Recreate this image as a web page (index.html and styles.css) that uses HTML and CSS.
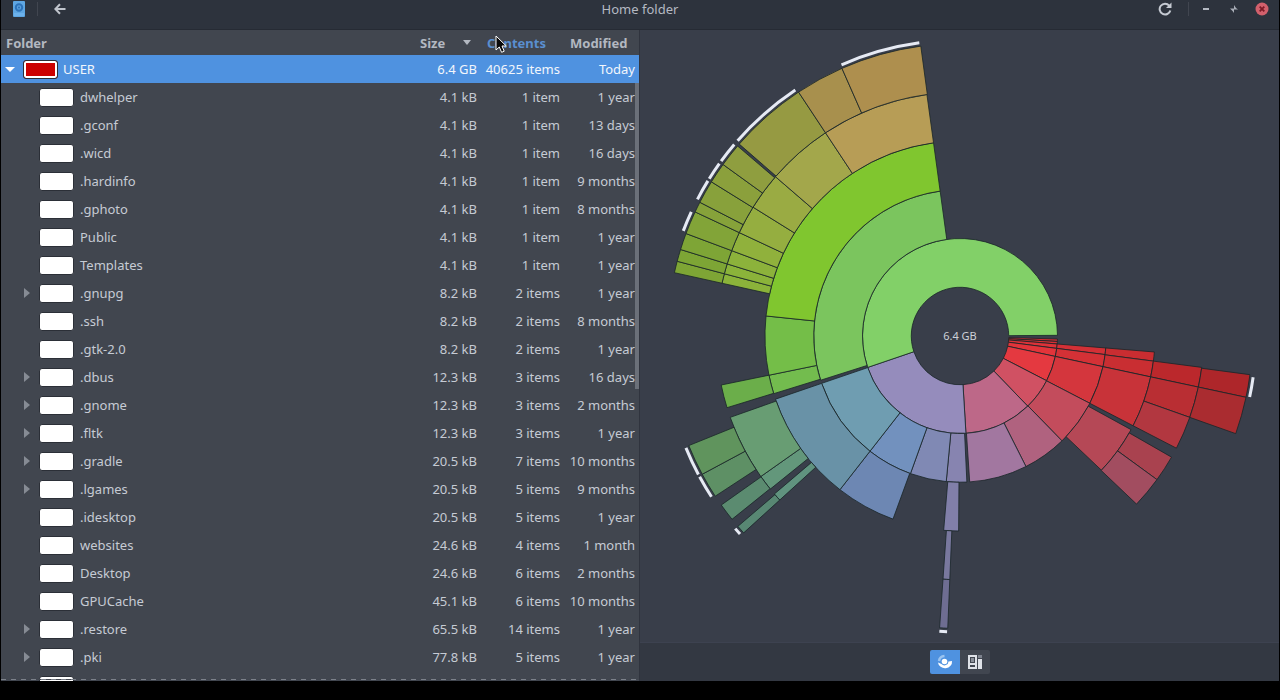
FILE: index.html
```html
<!DOCTYPE html>
<html lang="en">
<head>
    <meta charset="UTF-8">
    <meta name="viewport" content="width=device-width, initial-scale=1.0">
    <title>Home folder</title>
    <link rel="stylesheet" href="styles.css">
</head>
<body>
    <div class="window">
        <header class="titlebar">
            <div class="bar-left">
                <svg class="app-icon" width="12" height="16" viewBox="0 0 12 16">
                    <rect width="12" height="16" rx="1" fill="#5ea6e2"/>
                    <rect x="1" y="12" width="10" height="3" fill="#6cb2ec"/>
                    <circle cx="6" cy="6.500" r="3.200" fill="#5a9fdc" stroke="#2c72b8" stroke-width="2"/>
                    <circle cx="6" cy="6.500" r="1" fill="#2c72b8"/>
                </svg>
                <span class="bar-sep"></span>
                <button class="icon-btn back" aria-label="Back">
                    <svg width="12" height="12" viewBox="0 0 12 12" fill="none" stroke="#c0c5cd" stroke-width="2">
                        <path d="M11.500 6H1.500M6 1.200L1.300 6L6 10.800"/>
                    </svg>
                </button>
            </div>
            <h1 class="title">Home folder</h1>
            <div class="bar-right">
                <button class="icon-btn" aria-label="Reload">
                    <svg width="14" height="14" viewBox="0 0 14 14">
                        <path d="M11.200 3.600A5.400 5.400 0 1 0 12.300 8.400" fill="none" stroke="#c5cad2" stroke-width="2"/>
                        <path d="M13.500 0.500V6H8z" fill="#c5cad2"/>
                    </svg>
                </button>
                <span class="bar-sep"></span>
                <button class="icon-btn" aria-label="Minimize">
                    <svg width="14" height="14" viewBox="0 0 14 14"><rect x="4" y="6" width="6" height="2" fill="#b4b9c2"/></svg>
                </button>
                <button class="icon-btn" aria-label="Restore">
                    <svg width="14" height="14" viewBox="0 0 14 14" fill="#a9aeb8">
                        <path d="M3 6.500h4V11L5.500 9z"/>
                        <path d="M7 3v4.500h4L9 6z"/>
                    </svg>
                </button>
                <button class="icon-btn" aria-label="Close">
                    <svg width="14" height="14" viewBox="0 0 14 14">
                        <circle cx="7" cy="7" r="6.500" fill="#d2606c"/>
                        <path d="M4.700 4.700L9.300 9.300M9.300 4.700L4.700 9.300" stroke="#7d1a26" stroke-width="1.800"/>
                    </svg>
                </button>
            </div>
        </header>

        <main class="panes">
            <section class="folders">
                <table class="tree">
                    <thead>
                        <tr>
                            <th class="col-name"><button>Folder</button></th>
                            <th class="col-size"><button>Size<span class="sort"></span></button></th>
                            <th class="col-items"><button class="hover">Contents</button></th>
                            <th class="col-date"><button>Modified</button></th>
                        </tr>
                    </thead>
                    <tbody>
                        <tr class="selected">
                            <td><div class="name root"><button class="expander open" aria-label="Collapse USER"></button><span class="usage full"></span>USER</div></td>
                            <td>6.4 GB</td><td>40625 items</td><td>Today</td>
                        </tr>
                        <tr>
                            <td><div class="name"><span class="usage"></span>dwhelper</div></td>
                            <td>4.1 kB</td><td>1 item</td><td>1 year</td>
                        </tr>
                        <tr>
                            <td><div class="name"><span class="usage"></span>.gconf</div></td>
                            <td>4.1 kB</td><td>1 item</td><td>13 days</td>
                        </tr>
                        <tr>
                            <td><div class="name"><span class="usage"></span>.wicd</div></td>
                            <td>4.1 kB</td><td>1 item</td><td>16 days</td>
                        </tr>
                        <tr>
                            <td><div class="name"><span class="usage"></span>.hardinfo</div></td>
                            <td>4.1 kB</td><td>1 item</td><td>9 months</td>
                        </tr>
                        <tr>
                            <td><div class="name"><span class="usage"></span>.gphoto</div></td>
                            <td>4.1 kB</td><td>1 item</td><td>8 months</td>
                        </tr>
                        <tr>
                            <td><div class="name"><span class="usage"></span>Public</div></td>
                            <td>4.1 kB</td><td>1 item</td><td>1 year</td>
                        </tr>
                        <tr>
                            <td><div class="name"><span class="usage"></span>Templates</div></td>
                            <td>4.1 kB</td><td>1 item</td><td>1 year</td>
                        </tr>
                        <tr>
                            <td><div class="name"><button class="expander" aria-label="Expand .gnupg"></button><span class="usage"></span>.gnupg</div></td>
                            <td>8.2 kB</td><td>2 items</td><td>1 year</td>
                        </tr>
                        <tr>
                            <td><div class="name"><span class="usage"></span>.ssh</div></td>
                            <td>8.2 kB</td><td>2 items</td><td>8 months</td>
                        </tr>
                        <tr>
                            <td><div class="name"><span class="usage"></span>.gtk-2.0</div></td>
                            <td>8.2 kB</td><td>2 items</td><td>1 year</td>
                        </tr>
                        <tr>
                            <td><div class="name"><button class="expander" aria-label="Expand .dbus"></button><span class="usage"></span>.dbus</div></td>
                            <td>12.3 kB</td><td>3 items</td><td>16 days</td>
                        </tr>
                        <tr>
                            <td><div class="name"><button class="expander" aria-label="Expand .gnome"></button><span class="usage"></span>.gnome</div></td>
                            <td>12.3 kB</td><td>3 items</td><td>2 months</td>
                        </tr>
                        <tr>
                            <td><div class="name"><button class="expander" aria-label="Expand .fltk"></button><span class="usage"></span>.fltk</div></td>
                            <td>12.3 kB</td><td>3 items</td><td>1 year</td>
                        </tr>
                        <tr>
                            <td><div class="name"><button class="expander" aria-label="Expand .gradle"></button><span class="usage"></span>.gradle</div></td>
                            <td>20.5 kB</td><td>7 items</td><td>10 months</td>
                        </tr>
                        <tr>
                            <td><div class="name"><button class="expander" aria-label="Expand .lgames"></button><span class="usage"></span>.lgames</div></td>
                            <td>20.5 kB</td><td>5 items</td><td>9 months</td>
                        </tr>
                        <tr>
                            <td><div class="name"><span class="usage"></span>.idesktop</div></td>
                            <td>20.5 kB</td><td>5 items</td><td>1 year</td>
                        </tr>
                        <tr>
                            <td><div class="name"><span class="usage"></span>websites</div></td>
                            <td>24.6 kB</td><td>4 items</td><td>1 month</td>
                        </tr>
                        <tr>
                            <td><div class="name"><span class="usage"></span>Desktop</div></td>
                            <td>24.6 kB</td><td>6 items</td><td>2 months</td>
                        </tr>
                        <tr>
                            <td><div class="name"><span class="usage"></span>GPUCache</div></td>
                            <td>45.1 kB</td><td>6 items</td><td>10 months</td>
                        </tr>
                        <tr>
                            <td><div class="name"><button class="expander" aria-label="Expand .restore"></button><span class="usage"></span>.restore</div></td>
                            <td>65.5 kB</td><td>14 items</td><td>1 year</td>
                        </tr>
                        <tr>
                            <td><div class="name"><button class="expander" aria-label="Expand .pki"></button><span class="usage"></span>.pki</div></td>
                            <td>77.8 kB</td><td>5 items</td><td>1 year</td>
                        </tr>
                        <tr>
                            <td><div class="name"><span class="usage"></span></div></td>
                            <td></td><td></td><td></td>
                        </tr>
                    </tbody>
                </table>
                <div class="scrollbar"></div>
            </section>

            <section class="chart-pane">
                <div class="chart">
                    <svg id="rings" viewBox="-306 -306 612 612" role="img" aria-label="Rings chart">
                        <text class="total" x="0" y="4" text-anchor="middle">6.4 GB</text>
                    </svg>
                </div>
                <footer class="switcher">
                    <button class="view active" aria-label="Rings chart">
                        <svg width="16" height="16" viewBox="0 0 16 16">
                            <path d="M2 7A6 6 0 0 1 7.500 2" fill="none" stroke="#9cc4f0" stroke-width="2.500"/>
                            <path d="M1 8.500A7 6.500 0 0 0 15 7L11.500 7.500A4 4 0 0 1 4.500 10z" fill="#fff"/>
                            <circle cx="7.500" cy="7.500" r="2.800" fill="#fff"/>
                        </svg>
                    </button>
                    <button class="view" aria-label="Treemap chart">
                        <svg width="16" height="16" viewBox="0 0 16 16">
                            <path d="M1 1h9v14H1zM3 3v6h5V3zM3 11v2h5v-2z" fill="#dfe2e8" fill-rule="evenodd"/>
                            <rect x="4" y="4" width="3" height="4" fill="#8a8f99"/>
                            <rect x="11" y="1" width="4" height="3" fill="#7d828d"/>
                            <rect x="11" y="5" width="4" height="10" fill="#dfe2e8"/>
                        </svg>
                    </button>
                </footer>
            </section>
        </main>

        <svg class="pointer" width="13" height="19" viewBox="0 0 13 19">
            <path d="M1 1V15L4.300 12L6.600 17.300L9.200 16.200L7 11H11.300z" fill="#0a0a0a" stroke="#fff" stroke-width="1"/>
        </svg>
    </div>
    <script src="script.js"></script>
</body>
</html>
```

FILE: styles.css
```css
* {
    box-sizing: border-box;
}
body {
    margin: 0;
    background: #000;
    color: #c6cbd4;
    font-family: "Noto Sans", "Open Sans", sans-serif;
    font-size: 13px;
    line-height: 18px;
}
button {
    margin: 0;
    padding: 0;
    border: none;
    background: none;
    color: inherit;
    font: inherit;
}
.window {
    position: relative;
    display: flex;
    flex-direction: column;
    height: calc(100vh - 19px);
    margin: 0 1px;
    background: #393e4a;
    overflow: hidden;
}

/* title bar */
.titlebar {
    display: grid;
    grid-template-columns: 1fr auto 1fr;
    align-items: center;
    padding: 0 10px 11px;
    background: #2d333d;
    border-bottom: 1px solid #262b34;
}
.title {
    margin: 0;
    font-size: 13px;
    font-weight: normal;
    color: #b4b9c2;
}
.bar-left,
.bar-right {
    display: flex;
    align-items: center;
}
.bar-left {
    padding-left: 2px;
}
.bar-right {
    justify-content: flex-end;
    gap: 14px;
}
.bar-sep {
    width: 1px;
    height: 14px;
    background: #414650;
}
.bar-left .bar-sep {
    margin: 0 16px 0 12px;
}
.bar-right .bar-sep {
    margin: 0 -4px 0 2px;
}
.icon-btn {
    display: flex;
}

/* folder tree */
.panes {
    display: grid;
    grid-template-columns: 1fr 1fr;
    flex: 1;
    min-height: 0;
}
.folders {
    position: relative;
    overflow: hidden;
    background: #41464f;
    border-right: 1px solid #30343e;
}
.folders::after {
    content: "";
    position: absolute;
    left: 0;
    right: 0;
    bottom: 1px;
    height: 1px;
    background: repeating-linear-gradient(90deg, #7c818a 0 5px, #41464f 5px 10px);
}
.tree {
    width: 100%;
    table-layout: fixed;
    border-collapse: collapse;
}
.tree th {
    height: 25px;
    padding: 0 6px;
    text-align: left;
    font-weight: bold;
    color: #b3b8c1;
}
.tree .col-name {
    padding-left: 5px;
}
.tree th button {
    display: flex;
    align-items: center;
    justify-content: space-between;
    width: 100%;
}
.tree th .hover {
    color: #5a8fd0;
}
.col-size {
    width: 67px;
}
.col-items {
    width: 83px;
}
.col-date {
    width: 75px;
}
.sort {
    margin-right: 4px;
    border: 4px solid transparent;
    border-top: 5px solid #b3b8c1;
    border-bottom: none;
}
.tree td {
    height: 28px;
    padding: 0 4px 0 0;
    text-align: right;
    white-space: nowrap;
}
.selected {
    background: #4f92e0;
    color: #f2f6fc;
}
.name {
    position: relative;
    display: flex;
    align-items: center;
    gap: 6px;
    padding-left: 38px;
}
.name.root {
    padding-left: 22px;
    gap: 5px;
}
.usage {
    width: 35px;
    height: 19px;
    border: 1px solid #2b2f37;
    border-radius: 3px;
    background: #fff;
}
.usage.full {
    background: #c00;
    box-shadow: inset 0 0 0 2px #fff;
}
.expander {
    position: absolute;
    left: 23px;
    border: 5px solid transparent;
    border-left: 6px solid #868b94;
    border-right: none;
}
.expander.open {
    left: 4px;
    border: 5px solid transparent;
    border-top: 5px solid #fff;
    border-bottom: none;
}
.scrollbar {
    position: absolute;
    top: 53px;
    right: 0;
    width: 4px;
    height: 47%;
    background: #6b7079;
}

/* chart */
.chart-pane {
    display: flex;
    flex-direction: column;
    min-height: 0;
}
.chart {
    flex: 1;
    min-height: 0;
    padding-left: 1px;
}
.chart svg {
    display: block;
    width: 100%;
    height: 100%;
}
.total {
    font-size: 11px;
    fill: #ccd0d8;
}
.slice {
    stroke: rgba(25, 38, 40, 0.8);
    stroke-width: 1;
}
.more {
    fill: none;
    stroke: #e6eaf4;
    stroke-width: 3;
}
.switcher {
    display: flex;
    justify-content: center;
    padding: 7px 0;
    background: #333842;
    border-top: 1px solid #3d4250;
}
.view {
    display: flex;
    align-items: center;
    justify-content: center;
    width: 30px;
    height: 24px;
    background: #414650;
    border-radius: 0 2px 2px 0;
}
.view.active {
    background: #4f92e0;
    border-radius: 2px 0 0 2px;
}
.pointer {
    position: absolute;
    left: 494px;
    top: 35px;
}
```

FILE: script.js
```javascript
const RING = 48.75;

// [ring, start angle, end angle, color], degrees clockwise from 3 o'clock
const slices = [
    [1, 1.8, 3.2, '#d42f35'],
    [1, 3.2, 4.7, '#d83035'],
    [1, 4.7, 7.3, '#dd3238'],
    [1, 7.3, 12.1, '#e2343a'],
    [1, 12.1, 27.3, '#e43940'],
    [1, 27.3, 46, '#d05163'],
    [1, 46, 86.5, '#bd6888'],
    [1, 86.5, 161.2, '#958cbc'],
    [1, 161.2, 359.6, '#82d068'],

    [2, 4.7, 7.3, '#d33036'],
    [2, 7.3, 12.1, '#d43136'],
    [2, 12.1, 27.4, '#d4363d'],
    [2, 27.4, 45.8, '#c34c5c'],
    [2, 45.8, 63.2, '#b0627f'],
    [2, 63.2, 86.2, '#a277a0'],
    [2, 87.3, 95.4, '#8784b0'],
    [2, 95.4, 109.8, '#8089b4'],
    [2, 109.8, 128, '#7291be'],
    [2, 128, 161.1, '#6f9db1'],
    [2, 162.4, 262.2, '#7bc55e'],

    [3, 4.7, 7.4, '#c92d31'],
    [3, 7.4, 12.1, '#c92e32'],
    [3, 12.1, 27.4, '#c83339'],
    [3, 28.7, 43.5, '#b54856'],
    [3, 90.4, 94.8, '#817fa9'],
    [3, 110.1, 128, '#6d87b3'],
    [3, 128, 161.1, '#6992a7'],
    [3, 162.8, 168.4, '#73bc4e'],
    [3, 168.4, 185.9, '#74be48'],
    [3, 185.9, 262.2, '#80c62f'],

    [4, 7.4, 12.1, '#bb282c'],
    [4, 12.1, 19.5, '#b92e33'],
    [4, 19.5, 27.4, '#b23740'],
    [4, 29.8, 36.1, '#a9424f'],
    [4, 36.1, 43.6, '#a24d60'],
    [4, 92.4, 94, '#79789e'],
    [4, 137.7, 139.6, '#60937f'],
    [4, 141.1, 144.8, '#63977b'],
    [4, 144.8, 160.5, '#689d73'],
    [4, 162.9, 168.4, '#6bae4a'],
    [4, 192.5, 194.8, '#8bb33a'],
    [4, 194.8, 197.2, '#8bb33a'],
    [4, 197.2, 200.5, '#8cb23b'],
    [4, 200.5, 205.1, '#90b13c'],
    [4, 205.1, 211.9, '#95ae40'],
    [4, 211.9, 220.8, '#9aab43'],
    [4, 220.8, 236.5, '#a3a74b'],
    [4, 236.5, 262.2, '#b79d56'],

    [5, 7.6, 12.1, '#ae262a'],
    [5, 12.1, 19.5, '#aa2c30'],
    [5, 92.4, 94, '#6e6d92'],
    [5, 137.7, 139.4, '#588773'],
    [5, 141.2, 144.7, '#5b8b70'],
    [5, 146.8, 151.8, '#5e9065'],
    [5, 151.8, 158, '#60945d'],
    [5, 192.5, 194.8, '#7ea535'],
    [5, 194.8, 197.2, '#7da535'],
    [5, 197.2, 200.5, '#7ea536'],
    [5, 200.5, 205.1, '#82a438'],
    [5, 205.1, 207.2, '#86a23a'],
    [5, 207.2, 211.8, '#88a13b'],
    [5, 211.8, 215.9, '#8ba03c'],
    [5, 215.9, 220.5, '#8f9e3f'],
    [5, 221, 236.5, '#969a42'],
    [5, 236.5, 246.2, '#a8904d'],
    [5, 246.2, 262.3, '#ae8f4e']
];

// folders deeper than the last ring
const more = [
    [8, 11.9],
    [92.5, 94],
    [138, 139.4],
    [147.1, 151.6],
    [152.1, 157.8],
    [200.8, 204.8],
    [207.5, 211.6],
    [212.1, 215.6],
    [216.2, 220.3],
    [221.3, 236.2],
    [246.4, 262.1]
];

const svg = document.getElementById('rings');

function point(r, deg) {
    const a = deg * Math.PI / 180;
    return (r * Math.cos(a)).toFixed(2) + ' ' + (r * Math.sin(a)).toFixed(2);
}

function addPath(d, className, fill) {
    const path = document.createElementNS('http://www.w3.org/2000/svg', 'path');
    path.setAttribute('d', d);
    path.setAttribute('class', className);
    if (fill) {
        path.setAttribute('fill', fill);
    }
    svg.appendChild(path);
}

slices.forEach(([ring, start, end, color]) => {
    const inner = ring * RING;
    const outer = inner + RING;
    const large = end - start > 180 ? 1 : 0;
    addPath(
        `M${point(inner, start)}L${point(outer, start)}` +
        `A${outer} ${outer} 0 ${large} 1 ${point(outer, end)}` +
        `L${point(inner, end)}A${inner} ${inner} 0 ${large} 0 ${point(inner, start)}Z`,
        'slice', color
    );
});

more.forEach(([start, end]) => {
    addPath(`M${point(296, start)}A296 296 0 0 1 ${point(296, end)}`, 'more');
});
```
